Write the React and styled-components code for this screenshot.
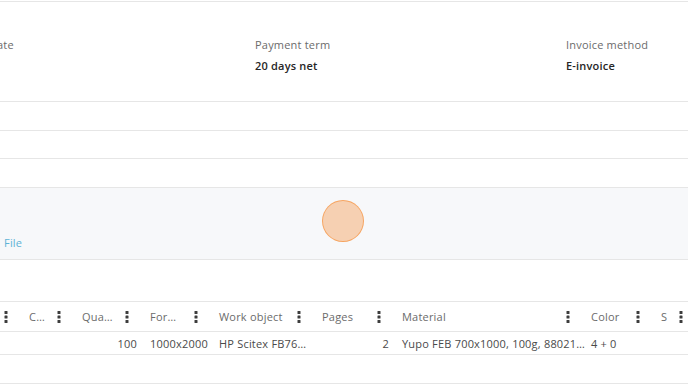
import React from "react";
import styled, { createGlobalStyle } from "styled-components";

const GlobalStyle = createGlobalStyle`
  html, body {
    margin: 0;
    padding: 0;
    background: #ffffff;
    overflow: hidden;
  }
  body {
    font-family: "Open Sans", "Liberation Sans", sans-serif;
    color: #333;
    letter-spacing: 0.2px;
  }
`;

const Page = styled.div`
  position: relative;
  width: 688px;
  height: 384px;
  overflow: hidden;
`;

/* the view is scrolled sideways, so the sheet starts left of the window */
const Sheet = styled.div`
  margin-left: -56px;
  width: 760px;
  border-top: 1px solid #e6e6e6;
  margin-top: 1px;
`;

const InfoGrid = styled.div`
  display: grid;
  grid-template-columns: 311px 311px 1fr;
  height: 100px;
  padding-top: 36px;
  box-sizing: border-box;
  border-bottom: 1px solid #e6e6e6;
`;

const InfoItem = styled.div`
  display: flex;
  flex-direction: column;
  gap: 7px;
`;

const InfoLabel = styled.span`
  font-size: 11px;
  color: #6b6b6b;
  line-height: 14px;
`;

const InfoValue = styled.span`
  font-size: 11px;
  font-weight: 600;
  color: #262626;
  line-height: 14px;
  min-height: 14px;
`;

const EmptyRow = styled.div`
  height: ${(p) => p.$h || 28}px;
  border-bottom: 1px solid #e6e6e6;
`;

const TabBand = styled.div`
  height: 72px;
  background: #f7f8fa;
  border-bottom: 1px solid #e6e6e6;
  display: flex;
  align-items: flex-end;
  padding: 0 0 9px 12px;
  box-sizing: border-box;
`;

const Tab = styled.span`
  width: 48px;
  font-size: 11px;
  line-height: 14px;
  color: ${(p) => (p.$active ? "#5fb3d6" : "#8a8a8a")};
`;

const Spacer = styled.div`
  height: 41px;
`;

const cols = "74px 53px 68px 69px 103px 80px 189px 70px 43px";

const TableHead = styled.div`
  display: grid;
  grid-template-columns: ${cols};
  height: 29px;
  border-top: 1px solid #e6e6e6;
  border-bottom: 1px solid #e6e6e6;
`;

const HeadCell = styled.div`
  display: flex;
  align-items: center;
  justify-content: space-between;
  padding: 0 10px 0 11px;
  font-size: 11px;
  color: #6b6b6b;
  white-space: nowrap;
  overflow: hidden;
`;

const DataRow = styled.div`
  display: grid;
  grid-template-columns: ${cols};
  height: 22px;
  border-bottom: 1px solid #e6e6e6;
`;

const DataCell = styled.div`
  display: flex;
  align-items: center;
  justify-content: ${(p) => (p.$num ? "flex-end" : "flex-start")};
  padding: ${(p) => (p.$num ? "0 2px 0 0" : "0 0 0 11px")};
  font-size: 11px;
  color: #4a4a4a;
  white-space: nowrap;
  overflow: visible;
`;

const Cursor = styled.div`
  position: absolute;
  left: 322px;
  top: 200px;
  width: 40px;
  height: 40px;
  border-radius: 50%;
  background: rgba(246, 152, 78, 0.42);
  border: 1.5px solid rgba(246, 150, 70, 0.75);
`;

const Dots = () => (
  <svg width="4" height="12" viewBox="0 0 4 12">
    <rect x="0.5" y="0" width="3" height="3" rx="0.6" fill="#3d3d3d" />
    <rect x="0.5" y="4.5" width="3" height="3" rx="0.6" fill="#3d3d3d" />
    <rect x="0.5" y="9" width="3" height="3" rx="0.6" fill="#3d3d3d" />
  </svg>
);

const headers = ["Pos", "C…", "Qua…", "For…", "Work object", "Pages", "Material", "Color", "S"];

export default function App() {
  return (
    <Page>
      <GlobalStyle />
      <Sheet>
        <InfoGrid>
          <InfoItem>
            <InfoLabel>Delivery date</InfoLabel>
            <InfoValue />
          </InfoItem>
          <InfoItem>
            <InfoLabel>Payment term</InfoLabel>
            <InfoValue>20 days net</InfoValue>
          </InfoItem>
          <InfoItem>
            <InfoLabel>Invoice method</InfoLabel>
            <InfoValue>E-invoice</InfoValue>
          </InfoItem>
        </InfoGrid>
        <EmptyRow $h={28} />
        <EmptyRow $h={27} />
        <EmptyRow $h={28} />
        <TabBand>
          <Tab>Info</Tab>
          <Tab $active>File</Tab>
        </TabBand>
        <Spacer />
        <TableHead>
          {headers.map((h) => (
            <HeadCell key={h}>
              <span>{h}</span>
              <Dots />
            </HeadCell>
          ))}
        </TableHead>
        <DataRow>
          <DataCell />
          <DataCell />
          <DataCell $num>100</DataCell>
          <DataCell>1000x2000</DataCell>
          <DataCell>HP Scitex FB76…</DataCell>
          <DataCell $num>2</DataCell>
          <DataCell>Yupo FEB 700x1000, 100g, 88021…</DataCell>
          <DataCell>4 + 0</DataCell>
          <DataCell />
        </DataRow>
        <EmptyRow $h={28} />
      </Sheet>
      <Cursor />
    </Page>
  );
}
